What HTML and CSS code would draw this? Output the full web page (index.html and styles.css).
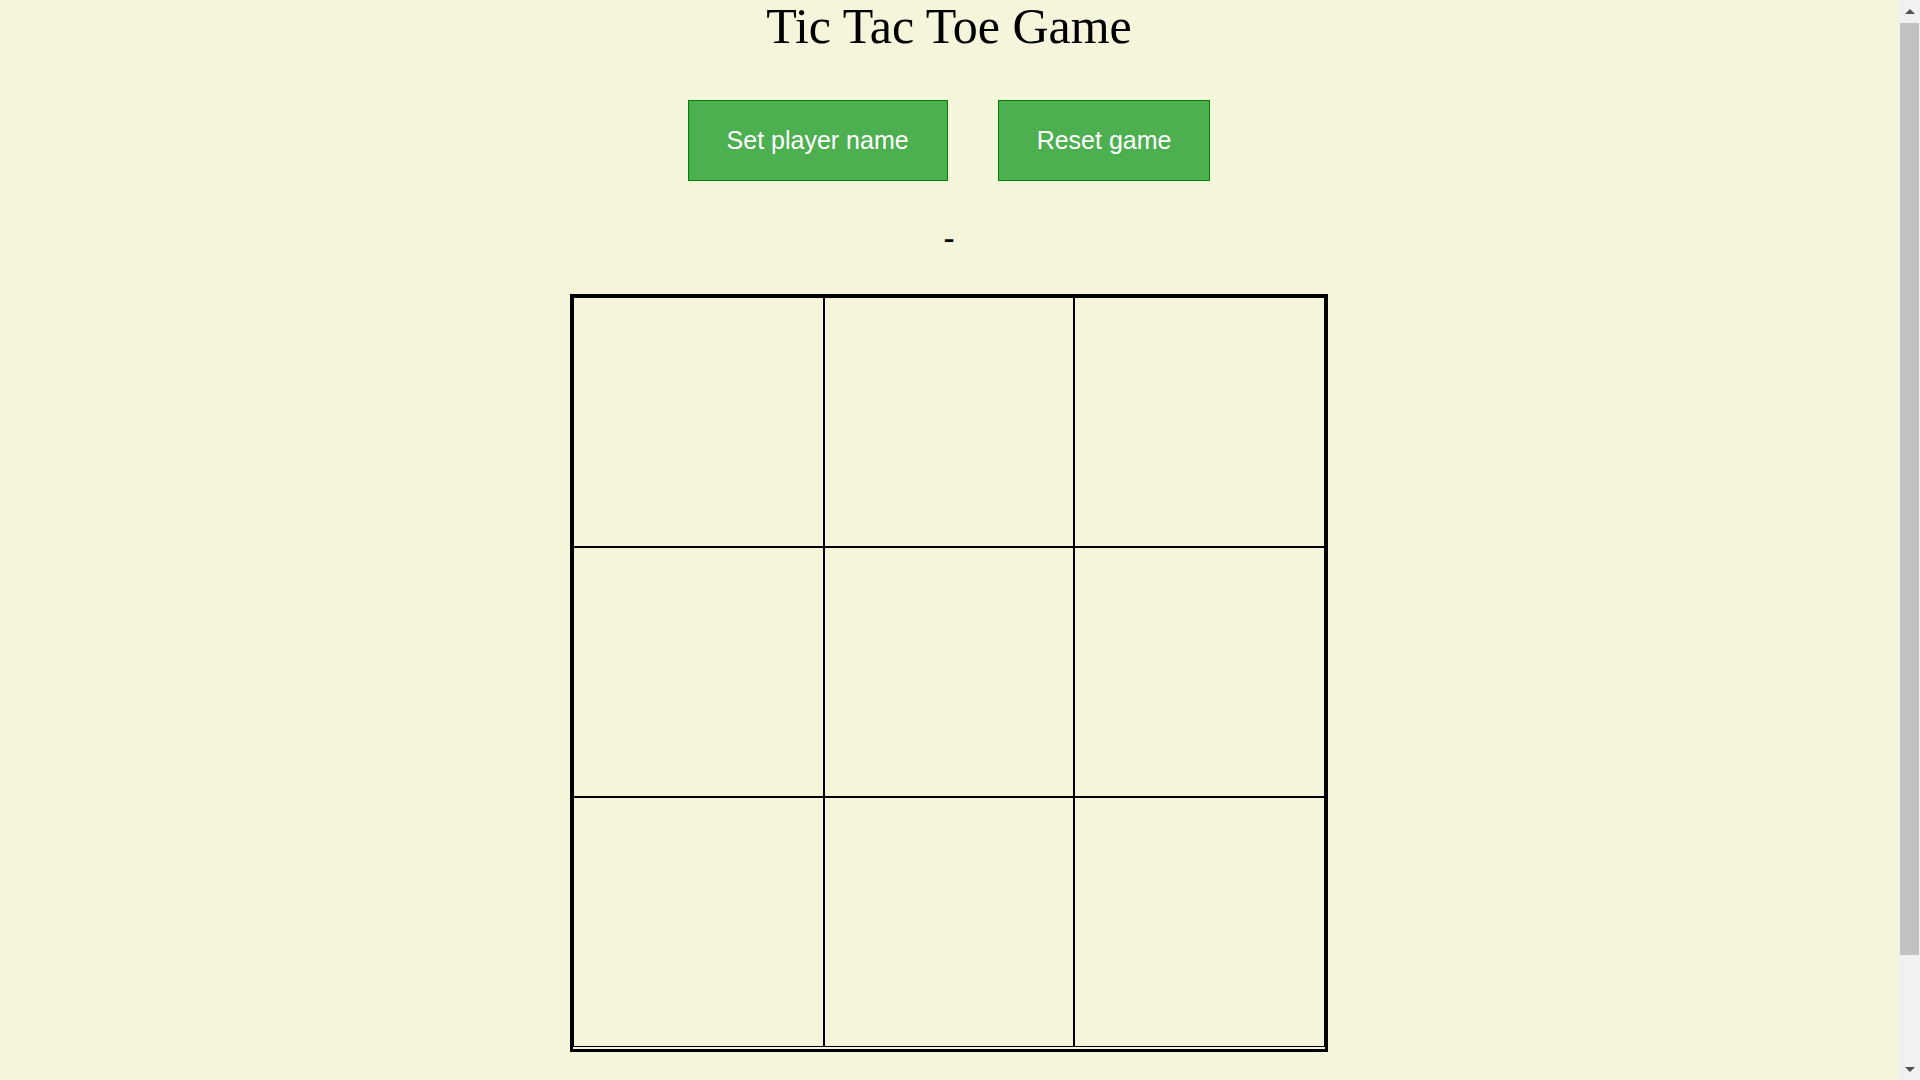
FILE: index.html
```html
<!DOCTYPE html>
<html lang="en">
<head>
<meta charset="utf-8">
<title>Tic Tac Toe Game</title>
<link rel="stylesheet" href="styles.css">
</head>
<body>
  <main class="page">
    <h1 class="title">Tic Tac Toe Game</h1>
    <div class="controls">
      <button class="btn" type="button">Set player name</button>
      <button class="btn" type="button">Reset game</button>
    </div>
    <div class="status">-</div>
    <div class="board">
      <div class="cell"></div>
      <div class="cell"></div>
      <div class="cell"></div>
      <div class="cell"></div>
      <div class="cell"></div>
      <div class="cell"></div>
      <div class="cell"></div>
      <div class="cell"></div>
      <div class="cell"></div>
    </div>
  </main>
  <div class="scrollbar" aria-hidden="true">
    <div class="sb-btn"><span class="arrow-up"></span></div>
    <div class="sb-track"><div class="sb-thumb"></div></div>
    <div class="sb-btn"><span class="arrow-down"></span></div>
  </div>
</body>
</html>
```
FILE: styles.css
```css
html, body {
  margin: 0;
  padding: 0;
}

body {
  background: #f5f5dc;
  font-family: "Liberation Serif", "Times New Roman", serif;
  color: #000;
  overflow: hidden;
  height: 1080px;
}

.page {
  margin-right: 22px;
}

.title {
  margin: 0;
  font-size: 50px;
  font-weight: normal;
  line-height: 53px;
  text-align: center;
}

.controls {
  display: flex;
  justify-content: center;
  gap: 50px;
  margin-top: 47px;
}

.btn {
  font-family: "Liberation Sans", Arial, sans-serif;
  font-size: 25px;
  line-height: 29px;
  color: #fff;
  background: #4caf50;
  border: 1px solid #008000;
  padding: 25px 38px;
  margin: 0;
  cursor: pointer;
}

.status {
  margin-top: 38px;
  font-size: 32px;
  font-weight: bold;
  line-height: 36px;
  text-align: center;
}

.board {
  width: 752px;
  margin: 39px auto 0;
  border: 3px solid #000;
  padding-bottom: 2px;
  display: grid;
  grid-template-columns: repeat(3, 1fr);
  grid-auto-rows: 250px;
}

.cell {
  box-sizing: border-box;
  border: 1px solid #000;
}

.scrollbar {
  position: fixed;
  top: 0;
  right: 0;
  width: 22px;
  height: 1080px;
  background: #f1f1f1;
  display: flex;
  flex-direction: column;
}

.sb-btn {
  height: 22px;
  display: flex;
  align-items: center;
  justify-content: center;
  padding-left: 2px;
}

.sb-track {
  flex: 1;
  padding: 1px 1px 0 2px;
}

.sb-thumb {
  height: 932px;
  background: #c1c1c1;
}

.arrow-up {
  width: 0;
  height: 0;
  border-left: 5px solid transparent;
  border-right: 5px solid transparent;
  border-bottom: 5px solid #505050;
}

.arrow-down {
  width: 0;
  height: 0;
  border-left: 5px solid transparent;
  border-right: 5px solid transparent;
  border-top: 5px solid #505050;
}
```
